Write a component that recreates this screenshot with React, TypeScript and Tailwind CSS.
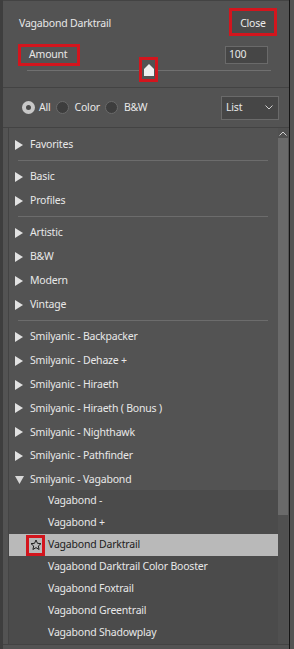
import React from "react";

type Row =
  | { kind: "group"; name: string; open?: boolean }
  | { kind: "sep" }
  | { kind: "item"; name: string; selected?: boolean };

const rows: Row[] = [
  { kind: "group", name: "Favorites" },
  { kind: "sep" },
  { kind: "group", name: "Basic" },
  { kind: "group", name: "Profiles" },
  { kind: "sep" },
  { kind: "group", name: "Artistic" },
  { kind: "group", name: "B&W" },
  { kind: "group", name: "Modern" },
  { kind: "group", name: "Vintage" },
  { kind: "sep" },
  { kind: "group", name: "Smilyanic - Backpacker" },
  { kind: "group", name: "Smilyanic - Dehaze +" },
  { kind: "group", name: "Smilyanic - Hiraeth" },
  { kind: "group", name: "Smilyanic - Hiraeth ( Bonus )" },
  { kind: "group", name: "Smilyanic - Nighthawk" },
  { kind: "group", name: "Smilyanic - Pathfinder" },
  { kind: "group", name: "Smilyanic - Vagabond", open: true },
  { kind: "item", name: "Vagabond -" },
  { kind: "item", name: "Vagabond +" },
  { kind: "item", name: "Vagabond Darktrail", selected: true },
  { kind: "item", name: "Vagabond Darktrail Color Booster" },
  { kind: "item", name: "Vagabond Foxtrail" },
  { kind: "item", name: "Vagabond Greentrail" },
  { kind: "item", name: "Vagabond Shadowplay" },
];

function Triangle({ open }: { open?: boolean }) {
  return open ? (
    <svg width="9" height="8" viewBox="0 0 9 8">
      <polygon points="0,0 9,0 4.5,8" fill="#d8d8d8" />
    </svg>
  ) : (
    <svg width="8" height="10" viewBox="0 0 8 10">
      <polygon points="0,0 8,5 0,10" fill="#e2e2e2" />
    </svg>
  );
}

function Radio({ checked }: { checked?: boolean }) {
  return checked ? (
    <span className="flex h-[13px] w-[13px] shrink-0 items-center justify-center rounded-full bg-[#c8c8c8]">
      <span className="block h-[5px] w-[5px] rounded-full bg-[#4a4a4a]" />
    </span>
  ) : (
    <span className="block h-[13px] w-[13px] shrink-0 rounded-full border border-[#6a6a6a] bg-[#3d3d3d]" />
  );
}

export default function App() {
  return (
    <div className="flex h-[649px] w-[294px] bg-[#535353] font-['Noto_Sans',sans-serif] text-[10.5px] tracking-[-0.2px] text-[#e8e8e8]">
      <div className="w-[3px] bg-[#3e3e3e]" />

      <div className="flex w-[286px] flex-col">
        {/* Header */}
        <div className="h-[88px] border-t border-b border-[#434343]">
          <div className="flex items-center justify-between pl-[16px] pr-[12px] pt-[7px]">
            <span className="mt-[4px]">Vagabond Darktrail</span>
            <button className="flex h-[28px] w-[48px] items-center justify-center border-[3px] border-[#d3151d] bg-[#4a4a4a] pt-[3px] text-[10.5px] text-[#ececec]">
              Close
            </button>
          </div>

          <div className="mt-[8px] flex items-center justify-between pl-[15px] pr-[21px]">
            <div className="flex h-[22px] w-[62px] items-center border-[3px] border-[#d3151d] pl-[8px]">
              Amount
            </div>
            <div className="flex h-[18px] w-[43px] items-center border border-[#6a6a6a] bg-[#464646] pl-[3px]">
              100
            </div>
          </div>

          <div className="relative ml-[24px] mr-[18px] mt-[4px] h-[1px] bg-[#707070]">
            <div className="absolute left-[112px] top-[-13px] flex h-[25px] w-[19px] items-center justify-center border-[3px] border-[#d3151d] bg-[#535353]">
              <svg width="10" height="12" viewBox="0 0 10 12">
                <polygon points="5,0 10,5 10,12 0,12 0,5" fill="#efefef" />
              </svg>
            </div>
          </div>
        </div>

        {/* Filter row */}
        <div className="flex h-[40px] items-center border-b border-[#434343] pl-[19px] pr-[10px]">
          <Radio checked />
          <span className="ml-[4px]">All</span>
          <span className="ml-[5px] flex">
            <Radio />
          </span>
          <span className="ml-[6px]">Color</span>
          <span className="ml-[5px] flex">
            <Radio />
          </span>
          <span className="ml-[6px]">B&amp;W</span>
          <div className="ml-auto flex h-[24px] w-[58px] items-center justify-between border border-[#6a6a6a] bg-[#464646] pl-[4px] pr-[5px]">
            <span>List</span>
            <svg width="8" height="5" viewBox="0 0 8 5">
              <polyline points="0.5,0.5 4,4 7.5,0.5" fill="none" stroke="#cfcfcf" strokeWidth="1" />
            </svg>
          </div>
        </div>

        {/* List */}
        <div className="flex h-[517px] border-b border-[#434343]">
          <div className="ml-[5px] flex w-[270px] flex-col border-l border-[#444444] pt-[5px]">
            {rows.map((r, i) => {
              if (r.kind === "sep") {
                return (
                  <div key={i} className="flex h-[8px] items-center pl-[9px] pr-[10px]">
                    <div className="h-[1px] w-full bg-[#6c6c6c]" />
                  </div>
                );
              }
              if (r.kind === "group") {
                return (
                  <div
                    key={i}
                    className={`flex ${r.open ? "h-[22px] pt-[2px]" : "h-[24px]"} items-center pl-[6px]`}
                  >
                    <span className="flex w-[15px]">
                      <Triangle open={r.open} />
                    </span>
                    <span>{r.name}</span>
                  </div>
                );
              }
              return (
                <div
                  key={i}
                  className={`flex h-[22px] items-center ${
                    r.selected ? "bg-[#b9b9b9] text-[#1c1c1c]" : "bg-[#4b4b4b]"
                  }`}
                >
                  <span className="ml-[17px] flex w-[19px]">
                    {r.selected && (
                      <span className="flex h-[21px] w-[19px] items-center justify-center border-[3px] border-[#d3151d]">
                        <svg width="12" height="12" viewBox="0 0 24 24">
                          <polygon
                            points="12,2 14.9,8.6 22,9.3 16.6,14 18.2,21 12,17.3 5.8,21 7.4,14 2,9.3 9.1,8.6"
                            fill="none"
                            stroke="#1e1e1e"
                            strokeWidth="2"
                            strokeLinejoin="round"
                          />
                        </svg>
                      </span>
                    )}
                  </span>
                  <span className="ml-[3px]">{r.name}</span>
                </div>
              );
            })}
          </div>

          {/* Scrollbar */}
          <div className="flex w-[10px] flex-col bg-[#505050]">
            <div className="flex h-[10px] items-center justify-center">
              <svg width="8" height="5" viewBox="0 0 8 5">
                <polyline points="0.5,4.5 4,1 7.5,4.5" fill="none" stroke="#d0d0d0" strokeWidth="1" />
              </svg>
            </div>
            <div className="h-[377px] bg-[#6a6a6a]" />
          </div>
        </div>
      </div>

      <div className="w-[1px] bg-[#151515]" />
      <div className="w-[4px] bg-[#535353]" />
    </div>
  );
}
